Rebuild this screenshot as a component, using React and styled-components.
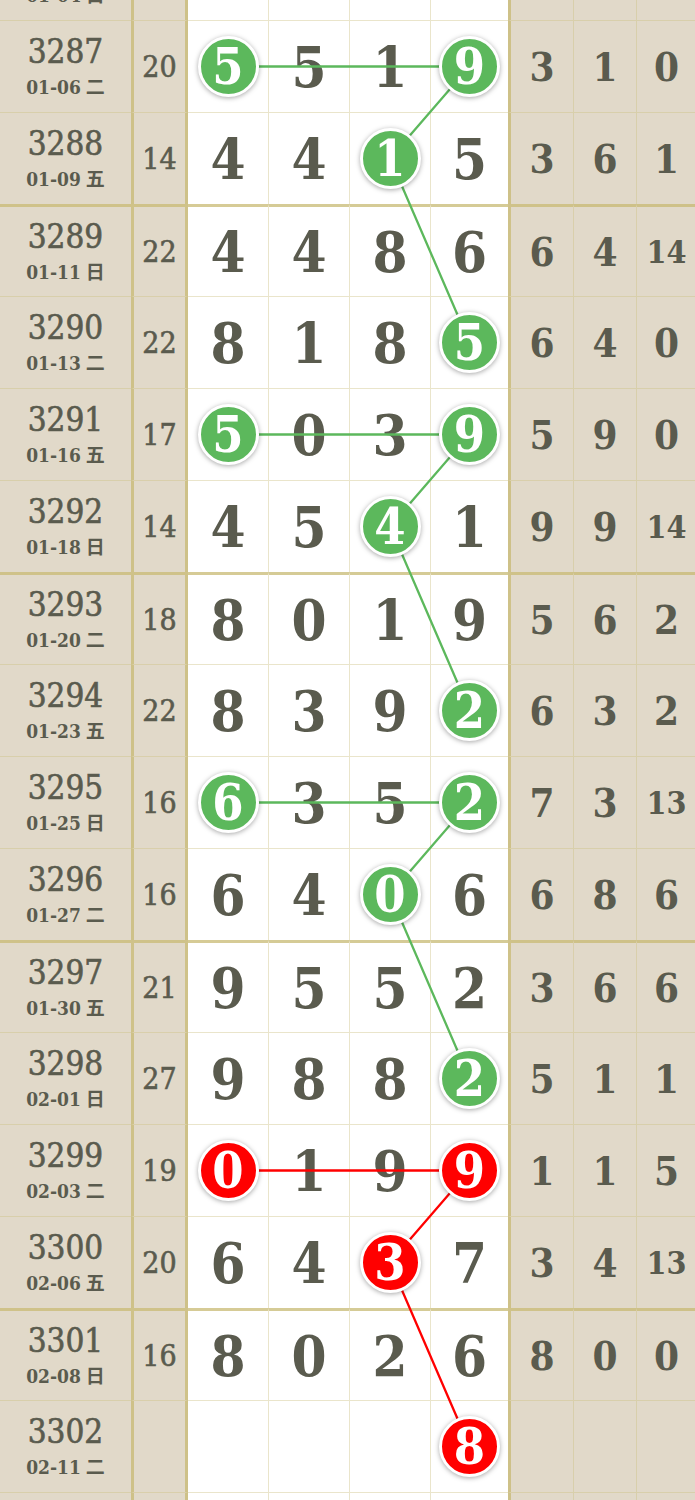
import React from "react";
import styled, { createGlobalStyle } from "styled-components";

const Global = createGlobalStyle`
  html, body { margin: 0; padding: 0; background: #ffffff; }
  body { overflow: hidden; }
`;

const TAN = "#e1d9c9";
const THIN = "rgba(205, 192, 130, 0.42)";
const THICK = "rgba(200, 186, 115, 0.75)";
const INK = "#5a5b4e";
const SERIF = `"DejaVu Serif Condensed", "DejaVu Serif", "Noto Sans CJK SC", serif`;

const Page = styled.div`
  width: 695px;
  height: 1500px;
  overflow: hidden;
  background: #fff;
`;

const Table = styled.div`
  position: relative;
  width: 699px;
  margin-top: -72px;
`;

const Row = styled.div`
  display: grid;
  grid-template-columns: 131px 57px 80px 81px 81px 78px 65px 63px 60px;
  height: 92px;
`;

const Cell = styled.div`
  box-sizing: border-box;
  border-top: ${(p) => (p.$thick ? 3 : 1)}px solid ${(p) => (p.$thick ? THICK : THIN)};
  display: flex;
  align-items: center;
  justify-content: center;
  color: ${INK};
  font-family: ${SERIF};
`;

const IssueCell = styled(Cell)`
  background: ${TAN};
  flex-direction: column;
  gap: 6px;
`;

const IssueNo = styled.div`
  font-size: 33px;
  line-height: 34px;
  font-weight: 400;
  -webkit-text-stroke: 0.6px ${INK};
`;

const IssueDate = styled.div`
  font-size: 19px;
  line-height: 22px;
  font-weight: 700;
  display: flex;
  gap: 5px;
  align-items: baseline;
`;

const Week = styled.span`
  font-family: "Noto Sans CJK SC", sans-serif;
  font-weight: 700;
  font-size: 19px;
`;

const SumCell = styled(Cell)`
  background: ${TAN};
  border-left: 3px solid ${THICK};
  border-right: 3px solid ${THICK};
  font-size: 30px;
  font-weight: 400;
  -webkit-text-stroke: 0.6px ${INK};
`;

const DigitCell = styled(Cell)`
  background: #fff;
  border-left: ${(p) => (p.$first ? 0 : 1)}px solid ${THIN};
  font-size: 56px;
  font-weight: 700;
`;

const StatCell = styled(Cell)`
  background: ${TAN};
  border-left: ${(p) => (p.$first ? 3 : 1)}px solid ${(p) => (p.$first ? THICK : THIN)};
  font-size: ${(p) => (p.$small ? 32 : 40)}px;
  font-weight: 700;
`;

const Ball = styled.div`
  position: relative;
  z-index: 2;
  box-sizing: border-box;
  width: 61px;
  height: 61px;
  border-radius: 50%;
  border: 3px solid #fff;
  background: ${(p) => (p.$red ? "#ff0000" : "#5cb85c")};
  box-shadow: 0 1px 5px rgba(0, 0, 0, 0.35);
  color: #fff;
  display: flex;
  align-items: center;
  justify-content: center;
  font-size: 50px;
  font-weight: 700;
  line-height: 1;
`;

const Lines = styled.svg`
  position: absolute;
  left: 188px;
  top: 0;
  z-index: 1;
  pointer-events: none;
`;

const rows = [
  { no: 3286, date: "01-04", wd: "日", partial: true },
  { no: 3287, date: "01-06", wd: "二", sum: 20, d: [5, 5, 1, 9], s: [3, 1, 0], balls: [0, 3] },
  { no: 3288, date: "01-09", wd: "五", sum: 14, d: [4, 4, 1, 5], s: [3, 6, 1], balls: [2] },
  { no: 3289, date: "01-11", wd: "日", sum: 22, d: [4, 4, 8, 6], s: [6, 4, 14], balls: [] },
  { no: 3290, date: "01-13", wd: "二", sum: 22, d: [8, 1, 8, 5], s: [6, 4, 0], balls: [3] },
  { no: 3291, date: "01-16", wd: "五", sum: 17, d: [5, 0, 3, 9], s: [5, 9, 0], balls: [0, 3] },
  { no: 3292, date: "01-18", wd: "日", sum: 14, d: [4, 5, 4, 1], s: [9, 9, 14], balls: [2] },
  { no: 3293, date: "01-20", wd: "二", sum: 18, d: [8, 0, 1, 9], s: [5, 6, 2], balls: [] },
  { no: 3294, date: "01-23", wd: "五", sum: 22, d: [8, 3, 9, 2], s: [6, 3, 2], balls: [3] },
  { no: 3295, date: "01-25", wd: "日", sum: 16, d: [6, 3, 5, 2], s: [7, 3, 13], balls: [0, 3] },
  { no: 3296, date: "01-27", wd: "二", sum: 16, d: [6, 4, 0, 6], s: [6, 8, 6], balls: [2] },
  { no: 3297, date: "01-30", wd: "五", sum: 21, d: [9, 5, 5, 2], s: [3, 6, 6], balls: [] },
  { no: 3298, date: "02-01", wd: "日", sum: 27, d: [9, 8, 8, 2], s: [5, 1, 1], balls: [3] },
  { no: 3299, date: "02-03", wd: "二", sum: 19, d: [0, 1, 9, 9], s: [1, 1, 5], balls: [0, 3], red: true },
  { no: 3300, date: "02-06", wd: "五", sum: 20, d: [6, 4, 3, 7], s: [3, 4, 13], balls: [2], red: true },
  { no: 3301, date: "02-08", wd: "日", sum: 16, d: [8, 0, 2, 6], s: [8, 0, 0], balls: [] },
  { no: 3302, date: "02-11", wd: "二", sum: "", d: ["", "", "", 8], s: ["", "", ""], balls: [3], red: true },
  { no: 3303, empty: true },
];

const paths = [
  { red: false, pts: [[1, 0], [1, 3], [2, 2], [4, 3]] },
  { red: false, pts: [[5, 0], [5, 3], [6, 2], [8, 3]] },
  { red: false, pts: [[9, 0], [9, 3], [10, 2], [12, 3]] },
  { red: true, pts: [[13, 0], [13, 3], [14, 2], [16, 3]] },
];

const colX = [40, 121, 202, 281.5];
const rowY = (i) => 92 * i + 46.5;

function DataRow({ r }) {
  const thick = !r.partial && (r.no - 1) % 4 === 0;
  const digits = r.d || ["", "", "", ""];
  const stats = r.s || ["", "", ""];
  return (
    <Row>
      <IssueCell $thick={thick}>
        {!r.empty && (
          <>
            <IssueNo>{r.no}</IssueNo>
            <IssueDate>
              {r.date}
              <Week>{r.wd}</Week>
            </IssueDate>
          </>
        )}
      </IssueCell>
      <SumCell $thick={thick}>{r.sum}</SumCell>
      {digits.map((v, k) => (
        <DigitCell key={k} $thick={thick} $first={k === 0}>
          {r.balls && r.balls.includes(k) ? <Ball $red={r.red}>{v}</Ball> : v}
        </DigitCell>
      ))}
      {stats.map((v, k) => (
        <StatCell key={k} $thick={thick} $first={k === 0} $small={String(v).length > 1}>
          {v}
        </StatCell>
      ))}
    </Row>
  );
}

export default function App() {
  return (
    <Page>
      <Global />
      <Table>
        {rows.map((r) => (
          <DataRow key={r.no} r={r} />
        ))}
        <Lines width="320" height={rows.length * 92}>
          {paths.map((p, i) => (
            <polyline
              key={i}
              points={p.pts.map(([ri, c]) => `${colX[c]},${rowY(ri)}`).join(" ")}
              fill="none"
              stroke={p.red ? "#ff0000" : "#5cb85c"}
              strokeWidth="2.3"
            />
          ))}
        </Lines>
      </Table>
    </Page>
  );
}
